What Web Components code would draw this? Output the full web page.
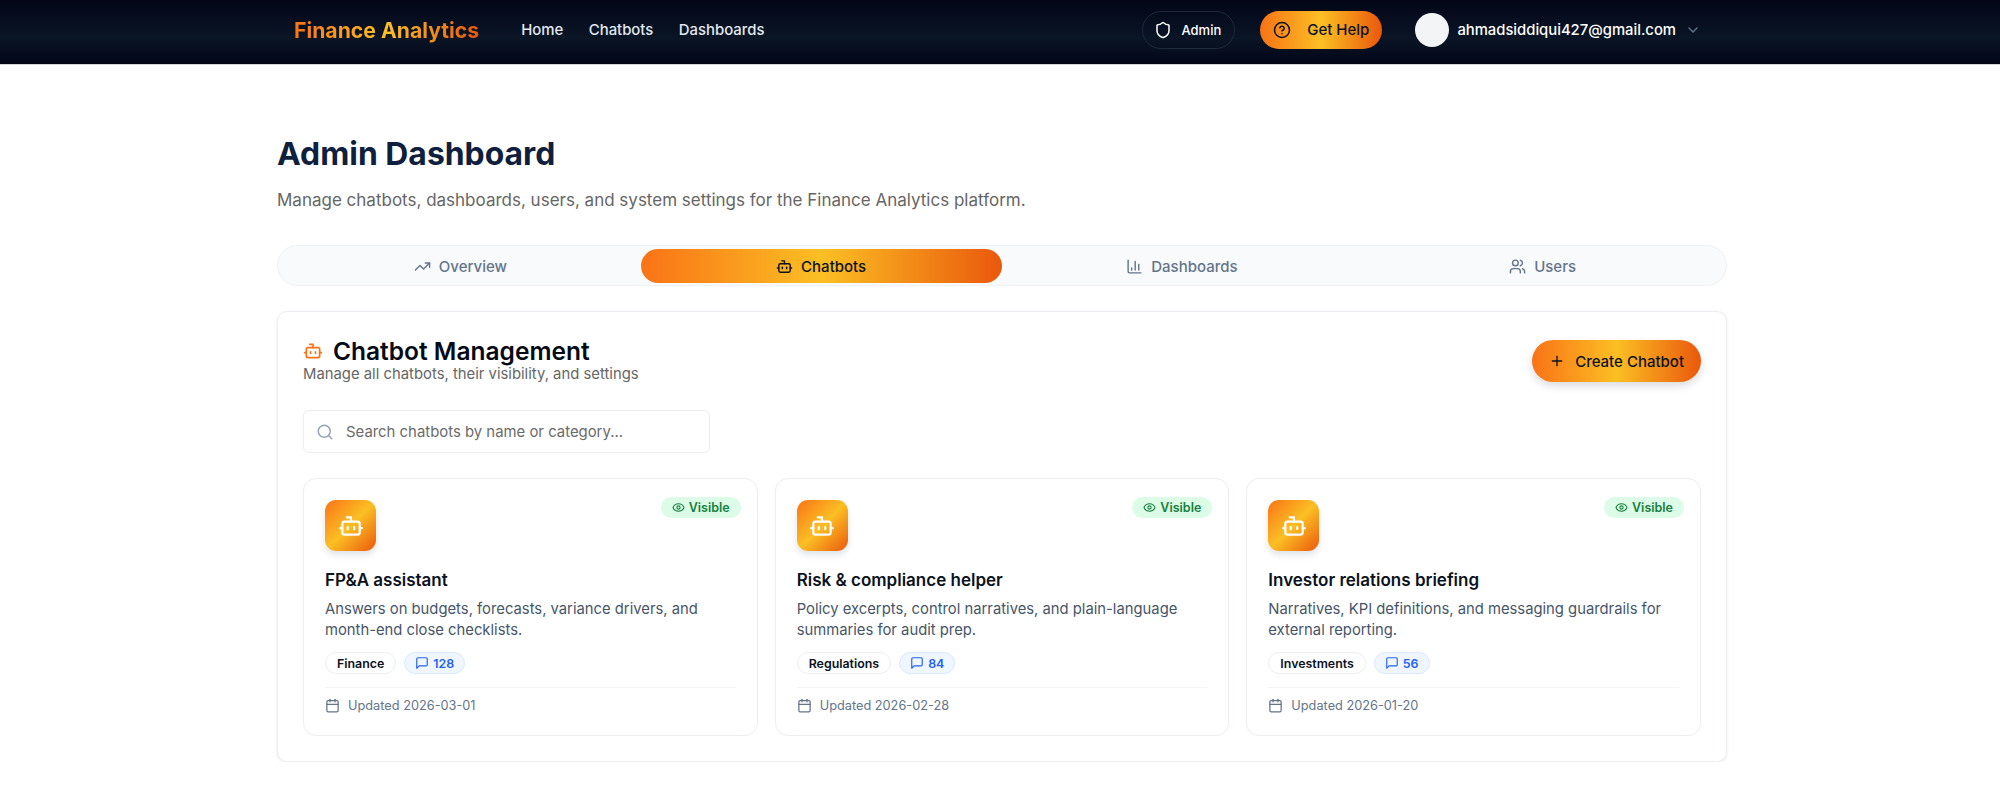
<!DOCTYPE html>
<html lang="en">
<head>
<meta charset="utf-8">
<title>Admin Dashboard</title>
<style>
  html, body { margin: 0; padding: 0; background: #fff; }
  body { font-family: Inter, "Liberation Sans", sans-serif; color: #0b1220; }
</style>
</head>
<body>
<app-nav></app-nav>
<admin-page>
  <tab-bar></tab-bar>
  <chatbot-panel>
    <chatbot-card name="FP&amp;A assistant" category="Finance" count="128" updated="2026-03-01">Answers on budgets, forecasts, variance drivers, and month-end close checklists.</chatbot-card>
    <chatbot-card name="Risk &amp; compliance helper" category="Regulations" count="84" updated="2026-02-28">Policy excerpts, control narratives, and plain-language summaries for audit prep.</chatbot-card>
    <chatbot-card name="Investor relations briefing" category="Investments" count="56" updated="2026-01-20">Narratives, KPI definitions, and messaging guardrails for external reporting.</chatbot-card>
  </chatbot-panel>
</admin-page>

<script>
const ICONS = {
  bot: '<path d="M12 8V4H8"/><rect width="16" height="12" x="4" y="8" rx="2"/><path d="M2 14h2"/><path d="M20 14h2"/><path d="M15 13v2"/><path d="M9 13v2"/>',
  trend: '<path d="m22 7-8.5 8.5-5-5L2 17"/><path d="M16 7h6v6"/>',
  chart: '<path d="M3 3v16a2 2 0 0 0 2 2h16"/><path d="M18 17V9"/><path d="M13 17V5"/><path d="M8 17v-3"/>',
  users: '<path d="M16 21v-2a4 4 0 0 0-4-4H6a4 4 0 0 0-4 4v2"/><circle cx="9" cy="7" r="4"/><path d="M22 21v-2a4 4 0 0 0-3-3.87"/><path d="M16 3.13a4 4 0 0 1 0 7.75"/>',
  shield: '<path d="M20 13c0 5-3.5 7.5-7.66 8.95a1 1 0 0 1-.67-.01C7.5 20.5 4 18 4 13V6a1 1 0 0 1 1-1c2 0 4.5-1.2 6.24-2.72a1.17 1.17 0 0 1 1.52 0C14.51 3.81 17 5 19 5a1 1 0 0 1 1 1z"/>',
  help: '<circle cx="12" cy="12" r="10"/><path d="M9.09 9a3 3 0 0 1 5.83 1c0 2-3 3-3 3"/><path d="M12 17h.01"/>',
  chevron: '<path d="m6 9 6 6 6-6"/>',
  eye: '<path d="M2.062 12.348a1 1 0 0 1 0-.696 10.75 10.75 0 0 1 19.876 0 1 1 0 0 1 0 .696 10.75 10.75 0 0 1-19.876 0"/><circle cx="12" cy="12" r="3"/>',
  message: '<path d="M21 15a2 2 0 0 1-2 2H7l-4 4V5a2 2 0 0 1 2-2h14a2 2 0 0 1 2 2z"/>',
  calendar: '<path d="M8 2v4"/><path d="M16 2v4"/><rect width="18" height="18" x="3" y="4" rx="2"/><path d="M3 10h18"/>',
  search: '<circle cx="11" cy="11" r="8"/><path d="m21 21-4.3-4.3"/>',
  plus: '<path d="M5 12h14"/><path d="M12 5v14"/>'
};

const BRAND = 'linear-gradient(90deg, #f97316 0%, #fbbf24 50%, #ea580c 100%)';

class UiIcon extends HTMLElement {
  connectedCallback() {
    const size = this.getAttribute('size') || 16;
    const stroke = this.getAttribute('stroke') || 2;
    this.attachShadow({ mode: 'open' }).innerHTML = `
      <style>:host { display: inline-flex; flex: none; } svg { display: block; }</style>
      <svg xmlns="http://www.w3.org/2000/svg" width="${size}" height="${size}" viewBox="0 0 24 24" fill="none"
        stroke="currentColor" stroke-width="${stroke}" stroke-linecap="round" stroke-linejoin="round">${ICONS[this.getAttribute('name')]}</svg>`;
  }
}
customElements.define('ui-icon', UiIcon);

class AppNav extends HTMLElement {
  connectedCallback() {
    this.attachShadow({ mode: 'open' }).innerHTML = `
      <style>
        :host {
          display: flex; align-items: center; height: 64px; box-sizing: content-box; padding: 0 299px 0 294px;
          background: linear-gradient(180deg, #020617 0%, #0a1526 60%, #020617 100%);
          border-bottom: 1px solid #d4d6da;
        }
        .logo {
          font-size: 21.2px; font-weight: 700; margin: -5px 42px 0 0;
          background: linear-gradient(90deg, #f97316, #fbbf24 50%, #ea580c);
          -webkit-background-clip: text; background-clip: text; color: transparent;
        }
        nav { display: flex; gap: 25.5px; margin-top: -5px; font-size: 14.9px; font-weight: 500; color: #e2e8f0; }
        .right { margin: -5px 0 0 auto; display: flex; align-items: center; }
        .admin {
          display: flex; align-items: center; gap: 9px; height: 38px; box-sizing: border-box; padding: 0 13px 0 11px;
          border: 1px solid #1e293b; border-radius: 19px; color: #fff; font-size: 13px; font-weight: 500;
        }
        .help {
          display: flex; align-items: center; gap: 16px; height: 38px; box-sizing: border-box; padding: 0 13px;
          margin-left: 25px; border-radius: 19px; background: ${BRAND}; color: #0b1220; font-size: 15px; font-weight: 500;
        }
        .avatar { width: 34px; height: 34px; border-radius: 50%; background: #f3f4f6; margin-left: 33px; }
        .email { margin-left: 8px; color: #fff; font-size: 14.8px; font-weight: 500; }
        .chev { margin-left: 9px; color: #64748b; }
      </style>
      <div class="logo">Finance Analytics</div>
      <nav><span>Home</span><span>Chatbots</span><span>Dashboards</span></nav>
      <div class="right">
        <div class="admin"><ui-icon name="shield" size="18"></ui-icon>Admin</div>
        <div class="help"><ui-icon name="help" size="18"></ui-icon>Get Help</div>
        <div class="avatar"></div>
        <div class="email">ahmadsiddiqui427@gmail.com</div>
        <ui-icon class="chev" name="chevron" size="16"></ui-icon>
      </div>`;
  }
}
customElements.define('app-nav', AppNav);

class AdminPage extends HTMLElement {
  connectedCallback() {
    this.attachShadow({ mode: 'open' }).innerHTML = `
      <style>
        :host { display: block; padding: 69px 273px 0 277px; }
        h1 { margin: 0; font-size: 31.9px; line-height: 40px; font-weight: 700; color: #0f1f3d; }
        p { margin: 14px 0 33px; font-size: 17px; line-height: 24px; color: #666; }
      </style>
      <h1>Admin Dashboard</h1>
      <p>Manage chatbots, dashboards, users, and system settings for the Finance Analytics platform.</p>
      <slot></slot>`;
  }
}
customElements.define('admin-page', AdminPage);

class TabBar extends HTMLElement {
  connectedCallback() {
    const tabs = [['trend', 'Overview'], ['bot', 'Chatbots'], ['chart', 'Dashboards'], ['users', 'Users']];
    this.attachShadow({ mode: 'open' }).innerHTML = `
      <style>
        :host {
          display: grid; grid-template-columns: repeat(4, 1fr); height: 41px; box-sizing: border-box; padding: 3px 3px 2px 2px;
          background: #f8fafc; border: 1px solid #eef0f4; border-radius: 21px; margin-bottom: 25px;
        }
        div { display: flex; align-items: center; justify-content: center; gap: 8px; font-size: 15px; font-weight: 500; color: #64748b; border-radius: 18px; }
        .on { background: ${BRAND}; color: #0b1220; }
      </style>
      ${tabs.map(([icon, label]) => `<div class="${label === 'Chatbots' ? 'on' : ''}"><ui-icon name="${icon}" size="17"></ui-icon>${label}</div>`).join('')}`;
  }
}
customElements.define('tab-bar', TabBar);

class ChatbotPanel extends HTMLElement {
  connectedCallback() {
    this.attachShadow({ mode: 'open' }).innerHTML = `
      <style>
        :host {
          display: block; box-sizing: border-box; height: 451px; padding: 25px; background: #fff;
          border: 1px solid #eceef2; border-radius: 10px; box-shadow: 0 1px 3px rgba(15, 23, 42, .08);
        }
        .head { display: flex; justify-content: space-between; align-items: flex-start; }
        .title { display: flex; align-items: center; gap: 10px; font-size: 24.5px; line-height: 28px; font-weight: 600; color: #050a14; }
        .title ui-icon { color: #f97316; }
        .sub { font-size: 14.85px; line-height: 18px; color: #666; }
        .create {
          display: flex; align-items: center; gap: 10px; height: 42px; margin-top: 3px; padding: 0 17px; border-radius: 21px; background: ${BRAND};
          font-size: 15px; font-weight: 500; color: #0b1220; box-shadow: 0 4px 8px rgba(15, 23, 42, .15);
        }
        .search {
          display: flex; align-items: center; gap: 12px; box-sizing: border-box; width: 407px; height: 43px; margin: 27px 0 25px; padding: 0 12px;
          border: 1px solid #eceef2; border-radius: 6px; font-size: 14.9px; color: #6b6b6b;
        }
        .search ui-icon { color: #94a3b8; }
        .grid { display: grid; grid-template-columns: repeat(3, 1fr); gap: 17px; }
      </style>
      <div class="head">
        <div>
          <div class="title"><ui-icon name="bot" size="20"></ui-icon>Chatbot Management</div>
          <div class="sub">Manage all chatbots, their visibility, and settings</div>
        </div>
        <div class="create"><ui-icon name="plus" size="16"></ui-icon>Create Chatbot</div>
      </div>
      <div class="search"><ui-icon name="search" size="18"></ui-icon>Search chatbots by name or category...</div>
      <div class="grid"><slot></slot></div>`;
  }
}
customElements.define('chatbot-panel', ChatbotPanel);

class ChatbotCard extends HTMLElement {
  connectedCallback() {
    const a = n => this.getAttribute(n).replace(/&/g, '&amp;');
    this.attachShadow({ mode: 'open' }).innerHTML = `
      <style>
        :host {
          display: block; position: relative; box-sizing: border-box; height: 258px; padding: 21px;
          border: 1px solid #eceef2; border-radius: 13px; background: #fff;
        }
        .avatar {
          width: 51px; height: 51px; border-radius: 11px; display: flex; align-items: center; justify-content: center;
          background: linear-gradient(135deg, #f97316, #fbbf24 50%, #ea580c); color: #fff; box-shadow: 0 4px 6px rgba(15, 23, 42, .12);
        }
        .visible {
          position: absolute; top: 18px; right: 16px; display: flex; align-items: center; gap: 4px; height: 21px; padding: 0 11px;
          border-radius: 11px; background: #dcfce7; color: #15803d; font-size: 12.5px; font-weight: 600;
        }
        h3 { margin: 16px 0 5.5px; font-size: 17px; line-height: 26px; font-weight: 600; color: #0b1220; }
        p { margin: 0 0 10.5px; font-size: 14.8px; line-height: 21.7px; color: #475569; }
        .tags { display: flex; gap: 8px; font-size: 12.4px; font-weight: 600; }
        .tag { height: 22px; box-sizing: border-box; display: flex; align-items: center; gap: 4px; padding: 0 11px; border: 1px solid #eceef2; border-radius: 12px; color: #0b1220; }
        .count { padding: 0 10px; background: #eff6ff; border-color: #dbeafe; color: #2563eb; }
        .foot { display: flex; align-items: center; gap: 8px; margin-top: 13px; padding-top: 9.5px; border-top: 1px solid #f3f4f6; font-size: 12.75px; line-height: 16px; color: #64748b; }
      </style>
      <div class="avatar"><ui-icon name="bot" size="26"></ui-icon></div>
      <div class="visible"><ui-icon name="eye" size="13"></ui-icon>Visible</div>
      <h3>${a('name')}</h3>
      <p><slot></slot></p>
      <div class="tags">
        <span class="tag">${a('category')}</span>
        <span class="tag count"><ui-icon name="message" size="14"></ui-icon>${a('count')}</span>
      </div>
      <div class="foot"><ui-icon name="calendar" size="15"></ui-icon>Updated ${a('updated')}</div>`;
  }
}
customElements.define('chatbot-card', ChatbotCard);
</script>
</body>
</html>
